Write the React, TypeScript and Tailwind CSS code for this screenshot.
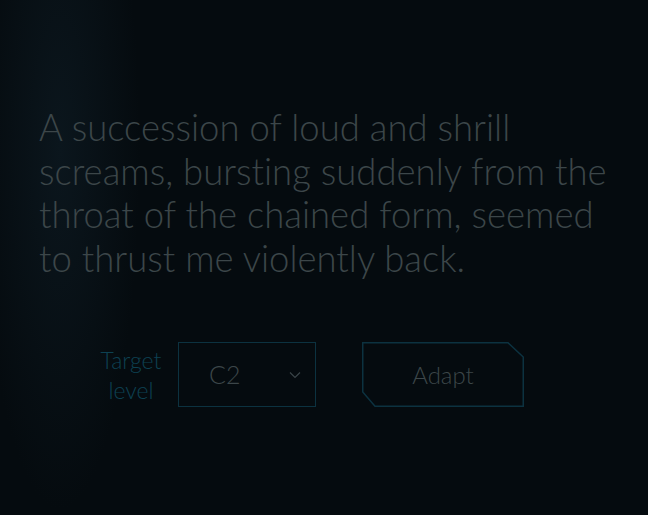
import React from 'react';

const Chevron: React.FC = () => (
    <svg width="12" height="8" viewBox="0 0 12 8" fill="none" className="text-[#3a4448]">
        <path d="M1 1.5 L6 6.5 L11 1.5" stroke="currentColor" strokeWidth="1.2" />
    </svg>
);

const AdaptButton: React.FC = () => (
    <button className="relative w-[162px] h-[65px] flex items-center justify-center text-[24px] font-light text-[#3c4649]">
        <svg className="absolute inset-0" width="162" height="65" viewBox="0 0 162 65" fill="none">
            <path d="M0.75 0.75 H146 L161.25 15 V64.25 H13 L0.75 50 Z" stroke="#0c3240" strokeWidth="1.5" />
        </svg>
        <span className="relative">Adapt</span>
    </button>
);

export default function App() {
    return (
        <div
            className="w-[648px] h-[515px] overflow-hidden text-[#3c4649] bg-[#050b0f] [font-variant-ligatures:none]"
            style={{ fontFamily: 'Lato, "Noto Sans", sans-serif' }}
        >
            <div className="w-full h-full bg-[radial-gradient(ellipse_80px_360px_at_60px_150px,#0b161d_0%,rgba(5,11,15,0)_100%)] flex flex-col pt-[106px] pl-[39px]">
                <p className="w-[580px] text-[36.5px] leading-[43.5px] font-light">
                    A succession of loud and shrill screams, bursting suddenly from the throat of the chained form, seemed to thrust me violently back.
                </p>

                <div className="flex items-center mt-[62px] pl-[57px]">
                    <label className="text-[#0d4152] text-[23px] leading-[30px] font-light text-center w-[70px]">
                        Target level
                    </label>
                    <div className="ml-[12px] w-[138px] h-[65px] border-[1.5px] border-[#0c3240] flex items-center justify-between pl-[30px] pr-[14px] text-[25px] font-light">
                        <span>C2</span>
                        <Chevron />
                    </div>
                    <div className="ml-[46px]">
                        <AdaptButton />
                    </div>
                </div>
            </div>
        </div>
    );
}
